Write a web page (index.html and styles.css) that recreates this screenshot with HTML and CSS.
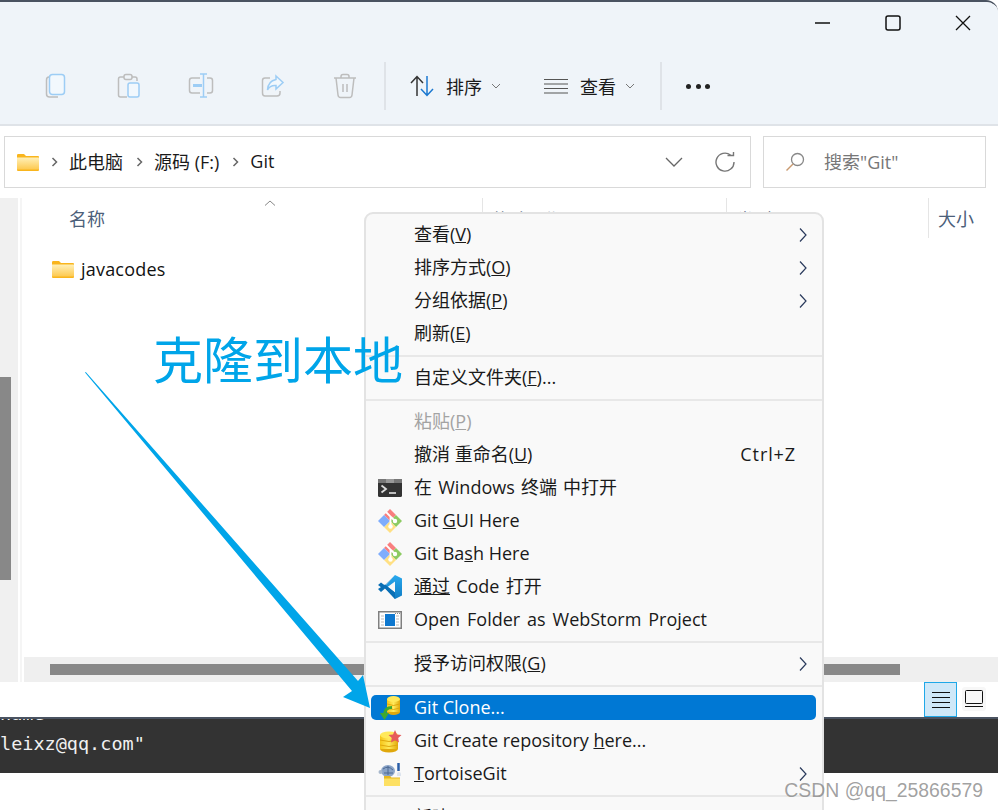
FILE: index.html
```html
<!DOCTYPE html>
<html lang="zh">
<head>
<meta charset="utf-8">
<title>Git</title>
<link rel="stylesheet" href="styles.css">
</head>
<body>
<svg class="defs" width="0" height="0">
  <defs>
    <linearGradient id="fg" x1="0" y1="0" x2="0" y2="1"><stop offset="0" stop-color="#fff0b8"/><stop offset="1" stop-color="#fdc94f"/></linearGradient>
    <linearGradient id="coin" x1="0" y1="0" x2="1" y2="0"><stop offset="0" stop-color="#f5c518"/><stop offset=".5" stop-color="#ffe95a"/><stop offset="1" stop-color="#e0a80c"/></linearGradient>
    <linearGradient id="vs" x1="0" y1="0" x2="0" y2="1"><stop offset="0" stop-color="#2aa9ee"/><stop offset="1" stop-color="#0f7cc4"/></linearGradient>
    <symbol id="folder" viewBox="0 0 22 17">
      <path d="M0 1.2Q0 0 1.2 0H7L9 2H21Q22 2 22 3V16Q22 17 21 17H1Q0 17 0 16Z" fill="#f9b51d"/>
      <path d="M0 3.5H21.6Q22 3.5 22 4V15.6H0Z" fill="url(#fg)"/>
    </symbol>
    <symbol id="git" viewBox="0 0 24 24">
      <path d="M12 0 18 6 12 12 6 6Z" fill="#f97f7f"/>
      <path d="M18 6 24 12 18 18 12 12Z" fill="#8ccb62"/>
      <path d="M12 12 18 18 12 24 6 18Z" fill="#ffe083"/>
      <path d="M6 6 12 12 6 18 0 12Z" fill="#7fadfd"/>
      <path d="M8 3 12.500 7.500V18M13 8 17 12" stroke="#fff" stroke-width="1.800" fill="none"/>
      <circle cx="12.500" cy="17.500" r="2.200" fill="#fff"/>
      <circle cx="17" cy="12" r="2.200" fill="#fff"/>
    </symbol>
    <symbol id="next" viewBox="0 0 10 16">
      <path d="M2 1.500 8 8 2 14.500" fill="none" stroke="#2a3a5c" stroke-width="1.200"/>
    </symbol>
  </defs>
</svg>

<div class="window">
  <header class="toolbar">
    <div class="caption">
      <svg class="cap-btn" width="16" height="16" viewBox="0 0 16 16"><path d="M0 8H15" stroke="#111" stroke-width="1.300"/></svg>
      <svg class="cap-btn" width="16" height="16" viewBox="0 0 16 16"><rect x="1" y="1" width="14" height="14" rx="2" fill="none" stroke="#111" stroke-width="1.500"/></svg>
      <svg class="cap-btn" width="16" height="16" viewBox="0 0 16 16"><path d="M1 1 15 15M15 1 1 15" stroke="#111" stroke-width="1.300"/></svg>
    </div>
    <div class="actions">
      <div class="tool">
        <svg width="24" height="26" viewBox="0 0 24 26" fill="none"><path d="M4 4Q1.500 4 1.500 7V21Q1.500 24 4.500 24H13" stroke="#bdbdbd" stroke-width="1.500"/><rect x="4.500" y="1.500" width="15" height="20" rx="3" stroke="#9dcdf5" stroke-width="1.500" fill="#f2f8fd"/></svg>
      </div>
      <div class="tool">
        <svg width="24" height="26" viewBox="0 0 24 26" fill="none"><path d="M7 4H3.500Q1.500 4 1.500 6V22Q1.500 24 3.500 24H10M15 4H18Q20 4 20 6V8" stroke="#bdbdbd" stroke-width="1.500"/><rect x="7" y="1.500" width="8" height="5" rx="2" stroke="#bdbdbd" stroke-width="1.500"/><rect x="11" y="10" width="11" height="14" rx="2" stroke="#9dcdf5" stroke-width="1.500" fill="#f2f8fd"/></svg>
      </div>
      <div class="tool">
        <svg width="26" height="26" viewBox="0 0 26 26" fill="none"><path d="M12 5H4Q1.500 5 1.500 7.500V17.500Q1.500 20 4 20H12M19 5H22Q24.500 5 24.500 7.500V17.500Q24.500 20 22 20H19" stroke="#bdbdbd" stroke-width="1.500"/><path d="M5 12.500H14" stroke="#9dcdf5" stroke-width="3"/><path d="M12 1H19M15.500 1V24M12 24H19" stroke="#9dcdf5" stroke-width="1.500"/></svg>
      </div>
      <div class="tool">
        <svg width="24" height="24" viewBox="0 0 24 24" fill="none"><path d="M9 4H4Q1.500 4 1.500 6.500V19Q1.500 22 4 22H16Q19 22 19 19V17" stroke="#bdbdbd" stroke-width="1.500"/><path d="M15 2 22 8.500 15 15V11.500Q9 11 6.500 16Q7 7 15 5.500Z" stroke="#9dcdf5" stroke-width="1.500" fill="#f2f8fd"/></svg>
      </div>
      <div class="tool">
        <svg width="24" height="26" viewBox="0 0 24 26" fill="none" stroke="#bdbdbd" stroke-width="1.500"><path d="M1 5H23M8 5V3.500Q8 1.500 10 1.500H14Q16 1.500 16 3.500V5M3 5 5 22Q5.300 24.500 7.500 24.500H16.500Q18.700 24.500 19 22L21 5M10 11V19M14 11V19"/></svg>
      </div>
      <span class="tool-sep"></span>
      <div class="menu-btn sort">
        <svg width="24" height="22" viewBox="0 0 24 22" fill="none" stroke-width="1.500"><path d="M7 21V1.500M1 8 7 1.500 13 8" stroke="#333"/><path d="M17 1V20.500M11 14 17 20.500 23 14" stroke="#1b78d0"/></svg>
        <span class="tool-label">排序</span>
        <svg class="caret" width="10" height="6" viewBox="0 0 10 6"><path d="M1 1 5 5 9 1" fill="none" stroke="#777"/></svg>
      </div>
      <div class="menu-btn view">
        <svg width="24" height="16" viewBox="0 0 24 16" fill="none" stroke="#555" stroke-width="1.200"><path d="M0 1.500H24M0 6H24M0 10.500H24M0 15H24"/></svg>
        <span class="tool-label">查看</span>
        <svg class="caret" width="10" height="6" viewBox="0 0 10 6"><path d="M1 1 5 5 9 1" fill="none" stroke="#777"/></svg>
      </div>
      <span class="tool-sep second"></span>
      <div class="more"><i></i><i></i><i></i></div>
    </div>
  </header>

  <div class="address-row">
    <div class="address">
      <svg class="addr-folder" width="22" height="17"><use href="#folder"/></svg>
      <svg class="crumb-sep" width="7" height="10" viewBox="0 0 7 10"><path d="M1.500 1 5.500 5 1.500 9" fill="none" stroke="#666" stroke-width="1.500"/></svg>
      <span class="crumb">此电脑</span>
      <svg class="crumb-sep" width="7" height="10" viewBox="0 0 7 10"><path d="M1.500 1 5.500 5 1.500 9" fill="none" stroke="#666" stroke-width="1.500"/></svg>
      <span class="crumb">源码 (F:)</span>
      <svg class="crumb-sep" width="7" height="10" viewBox="0 0 7 10"><path d="M1.500 1 5.500 5 1.500 9" fill="none" stroke="#666" stroke-width="1.500"/></svg>
      <span class="crumb">Git</span>
      <svg class="addr-down" width="18" height="10" viewBox="0 0 18 10"><path d="M1 1 9 9 17 1" fill="none" stroke="#666" stroke-width="1.300"/></svg>
      <svg class="addr-refresh" width="20" height="20" viewBox="0 0 20 20" fill="none"><path d="M15.500 3A9 9 0 1 0 19 10" stroke="#777" stroke-width="1.400"/><path d="M12.500 3.500H18.500V0" stroke="#777" stroke-width="1.400"/></svg>
    </div>
    <div class="search">
      <svg width="20" height="20" viewBox="0 0 20 20" fill="none"><circle cx="12.500" cy="7.500" r="6" stroke="#888" stroke-width="1.300"/><path d="M8 12 1.500 18.500" stroke="#c99a70" stroke-width="1.400"/></svg>
      <span class="search-text">搜索"Git"</span>
    </div>
  </div>

  <div class="body">
    <aside class="nav"><div class="nav-thumb"></div></aside>
    <span class="nav-edge"></span>
    <main class="files">
      <div class="columns">
        <div class="col col-name"><svg class="sort-up" width="12" height="6" viewBox="0 0 12 6"><path d="M1 5.500 6 1 11 5.500" fill="none" stroke="#888"/></svg>名称</div>
        <div class="col col-date">修改日期</div>
        <div class="col col-type">类型</div>
        <div class="col col-size">大小</div>
      </div>
      <div class="file-row">
        <svg width="22" height="17"><use href="#folder"/></svg>
        <span class="file-name">javacodes</span>
      </div>
      <div class="hscroll"><div class="hthumb"></div></div>
    </main>
  </div>

  <footer class="status">
    <div class="view-btn active">
      <svg width="18" height="18" viewBox="0 0 18 18" fill="none" stroke="#111" stroke-width="1"><path d="M0 1.500H18M0 6.500H18M0 11.500H18M0 16.500H18"/></svg>
    </div>
    <div class="view-btn">
      <svg width="18" height="18" viewBox="0 0 18 18" fill="none" stroke="#111" stroke-width="1"><rect x=".5" y=".5" width="17" height="13" rx="1"/><path d="M0 16.500H18"/></svg>
    </div>
  </footer>
</div>

<section class="terminal">
  <div class="term-line clipped">name</div>
  <div class="term-line email">leixz@qq.com"</div>
</section>

<nav class="context">
  <div class="item"><span class="ico"></span><span class="label">查看(<u>V</u>)</span><svg class="next" width="10" height="16"><use href="#next"/></svg></div>
  <div class="item"><span class="ico"></span><span class="label">排序方式(<u>O</u>)</span><svg class="next" width="10" height="16"><use href="#next"/></svg></div>
  <div class="item"><span class="ico"></span><span class="label">分组依据(<u>P</u>)</span><svg class="next" width="10" height="16"><use href="#next"/></svg></div>
  <div class="item"><span class="ico"></span><span class="label">刷新(<u>E</u>)</span></div>
  <hr class="sep">
  <div class="item"><span class="ico"></span><span class="label">自定义文件夹(<u>F</u>)...</span></div>
  <hr class="sep">
  <div class="item disabled"><span class="ico"></span><span class="label">粘贴(<u>P</u>)</span></div>
  <div class="item"><span class="ico"></span><span class="label">撤消 重命名(<u>U</u>)</span><span class="shortcut">Ctrl+Z</span></div>
  <div class="item"><span class="ico">
    <svg width="24" height="18" viewBox="0 0 24 18"><rect width="24" height="18" rx="1.500" fill="#333"/><rect x="0" width="24" height="4" fill="#777"/><rect x="8" width="8" height="4" fill="#999"/><path d="M3.500 6.500 8 10 3.500 13.500" fill="none" stroke="#ddd" stroke-width="1.800"/><path d="M11 14H18" stroke="#eee" stroke-width="1.500"/></svg>
  </span><span class="label spaced">在 Windows 终端 中打开</span></div>
  <div class="item"><span class="ico"><svg width="24" height="24"><use href="#git"/></svg></span><span class="label lat">Git <u>G</u>UI Here</span></div>
  <div class="item"><span class="ico"><svg width="24" height="24"><use href="#git"/></svg></span><span class="label lat">Git Ba<u>s</u>h Here</span></div>
  <div class="item"><span class="ico">
    <svg width="24" height="24" viewBox="0 0 24 24"><path d="M17 0 24 3.500V20.500L17 24 7 13V11Z" fill="url(#vs)"/><path d="M17 6.500V17.500L9.500 12Z" fill="#f9f9f9"/><path d="M17 0 4 13 0 10 3 7.500 7 10.500 17 0Z" fill="#0a6fb5"/><path d="M0 14 3 17 7 13.500 17 24V17.500L7 9.500Z" fill="#0a6fb5"/></svg>
  </span><span class="label spaced"><u>通过</u> Code 打开</span></div>
  <div class="item"><span class="ico">
    <svg width="24" height="18" viewBox="0 0 24 18"><rect x=".75" y=".75" width="22.500" height="16.500" fill="#fff" stroke="#808080" stroke-width="1.500"/><path d="M3 5H6M3 8H6M3 11H6M3 14H6M18 5H21M18 8H21M18 11H21M18 14H21" stroke="#bbb"/><path d="M17 2.500H22" stroke="#888" stroke-dasharray="1 1"/><rect x="7" y="3" width="10" height="12" fill="#0f78cf"/></svg>
  </span><span class="label lat wide">Open Folder as WebStorm Project</span></div>
  <hr class="sep">
  <div class="item"><span class="ico"></span><span class="label">授予访问权限(<u>G</u>)</span><svg class="next" width="10" height="16"><use href="#next"/></svg></div>
  <hr class="sep">
  <div class="item active"><span class="ico">
    <svg width="24" height="24" viewBox="0 0 24 24"><ellipse cx="15.500" cy="16" rx="6.500" ry="3" fill="#e0a80c"/><rect x="9" y="3" width="13" height="13" fill="url(#coin)"/><ellipse cx="15.500" cy="3" rx="6.500" ry="3" fill="#ffe95a"/><path d="M9 8Q15.500 11 22 8M9 12Q15.500 15 22 12" fill="none" stroke="#e0a80c"/><path d="M14 11.500Q7 11.500 6.500 18" fill="none" stroke="#3ea82f" stroke-width="3"/><path d="M2 17H11L6.500 24Z" fill="#3ea82f"/></svg>
  </span><span class="label lat">Git Clone...</span></div>
  <div class="item"><span class="ico">
    <svg width="24" height="24" viewBox="0 0 24 24"><ellipse cx="11" cy="20" rx="9" ry="3.500" fill="#e0a80c"/><rect x="2" y="6" width="18" height="14" fill="url(#coin)"/><ellipse cx="11" cy="6" rx="9" ry="3.500" fill="#ffe95a"/><path d="M2 11Q11 14 20 11M2 16Q11 19 20 16" fill="none" stroke="#e0a80c"/><path d="M17 1 19 5.500 23.500 6 20.200 9 21 13.500 17 11.300 13 13.500 13.800 9 10.500 6 15 5.500Z" fill="#e65a5a"/></svg>
  </span><span class="label lat">Git Create repository <u>h</u>ere...</span></div>
  <div class="item"><span class="ico">
    <svg width="24" height="24" viewBox="0 0 24 24"><ellipse cx="10" cy="9" rx="7" ry="6" fill="#8aa4c8"/><path d="M5 7Q10 3 15 8M6 11H15M10 4V13" stroke="#4d6a94" fill="none"/><circle cx="2.500" cy="10" r="2" fill="#a8b8cc"/><path d="M20.500 1V9" stroke="#2a5ea8" stroke-width="2.500"/><path d="M19 12Q19 10 21 10Q23 10 23 12V14H19Z" fill="#dde4ee"/><path d="M6 14H12L13.500 15.500H22V24H6Z" fill="#e6b820"/><path d="M6 16.500H22V24H6Z" fill="#fde063"/></svg>
  </span><span class="label lat"><u>T</u>ortoiseGit</span><svg class="next" width="10" height="16"><use href="#next"/></svg></div>
  <hr class="sep">
  <div class="item"><span class="ico"></span><span class="label">新建(<u>X</u>)</span></div>
</nav>

<svg class="arrow" width="300" height="345" viewBox="0 0 300 345">
  <path d="M0 .6 .8 0 273 309 278 303 285 336 258 325 267 319Z" fill="#00a5e9"/>
</svg>
<div class="note">克隆到本地</div>
<div class="watermark">CSDN @qq_25866579</div>
</body>
</html>
```

FILE: styles.css
```css
* { box-sizing: border-box; }
html, body { margin: 0; height: 810px; overflow: hidden; background: #fff; }
body {
  position: relative;
  font-family: "Open Sans", "Noto Sans CJK SC", sans-serif;
  font-size: 18px;
  color: #1a1a1a;
}
.defs { position: absolute; }

.window {
  height: 717px;
  display: flex;
  flex-direction: column;
  background: #fff;
  border-top: 2px solid #4a5361;
  border-radius: 0 12px 12px 0;
  overflow: hidden;
}
.toolbar {
  height: 124px;
  background: #eff4f9;
  border-bottom: 2px solid #dfe3e8;
  flex: none;
}
.caption {
  height: 42px;
  display: flex;
  justify-content: flex-end;
  align-items: center;
  padding: 0 27px 0 0;
  gap: 54px;
}
.actions {
  display: flex;
  align-items: center;
  height: 48px;
  margin-top: 18px;
  padding-left: 21px;
}
.tool {
  width: 72px;
  display: flex;
  justify-content: center;
  align-items: center;
}
.tool-sep {
  width: 2px;
  height: 48px;
  background: #dfe3e8;
  margin-left: 3px;
}
.menu-btn { display: flex; align-items: center; gap: 12px; }
.sort { margin-left: 24px; }
.view { margin-left: 43px; }
.caret { margin-left: -4px; }
.tool-label { width: 37px; }
.tool-sep.second { margin-left: 25px; }
.more { display: flex; gap: 4.500px; margin-left: 24px; }
.more i { width: 5px; height: 5px; border-radius: 50%; background: #222; }

.address-row {
  height: 72px;
  flex: none;
  display: flex;
  gap: 12px;
  padding: 10px 12px 10px 4px;
}
.address, .search {
  border: 1px solid #d9d9d9;
  display: flex;
  align-items: center;
  height: 52px;
  background: #fff;
}
.address { flex: 1; padding-left: 12px; }
.addr-folder { margin-right: 12px; }
.crumb-sep { margin-right: 11px; }
.crumb { margin-right: 13px; margin-top: -3px; }
.addr-down { margin-left: auto; margin-right: 32px; }
.addr-refresh { margin-right: 15px; }
.search { width: 223px; padding-left: 21px; gap: 19px; }
.search-text { color: #777; margin-top: -3px; }

.body { flex: 1; display: flex; min-height: 0; }
.nav { width: 18px; background: #f0f0f0; padding-top: 179px; flex: none; }
.nav-thumb { width: 11px; height: 203px; background: #888; }
.nav-edge { width: 2px; margin-left: 2px; background: #f5f5f5; flex: none; }
.files { flex: 1; display: flex; flex-direction: column; position: relative; }

.columns { display: flex; height: 40px; color: #4c607a; flex: none; }
.col { display: flex; align-items: center; padding-left: 9px; }
.col + .col { border-left: 1px solid #e5e5e5; }
.col-name { width: 460px; padding-left: 47px; position: relative; }
.sort-up { position: absolute; left: 242px; top: 2px; }
.col-date { width: 244px; padding-top: 2px; }
.col-type { width: 202px; padding-top: 2px; }
.col-size { flex: 1; }

.file-row {
  display: flex;
  align-items: center;
  gap: 7px;
  padding-left: 30px;
  height: 33px;
  margin-top: 15px;
  color: #111;
}
.file-name { margin-top: -1px; letter-spacing: .2px; }
.hscroll {
  margin-top: auto;
  margin-left: 2px;
  height: 25px;
  background: #efefef;
  padding: 7px 98px 7px 26px;
}
.hthumb { height: 11px; background: #888; }

.status {
  height: 35px;
  flex: none;
  display: flex;
  justify-content: flex-end;
  padding-right: 12px;
  gap: 5px;
}
.view-btn {
  width: 24px;
  display: flex;
  align-items: center;
  justify-content: center;
  margin: 5px 0 5px;
  background: #f7f7f7;
  border-radius: 3px;
  height: 24px;
}
.view-btn.active {
  width: 33px;
  height: 35px;
  margin: 0;
  background: #cfe8f8;
  border: 1px solid #1fa8e8;
  border-radius: 0;
}

.terminal {
  height: 56px;
  background: #333;
  border-top: 2px solid #4a5361;
  overflow: hidden;
  font-family: "DejaVu Sans Mono", monospace;
  font-size: 18.500px;
  color: #f0f0f0;
  line-height: 29px;
}
.term-line { white-space: pre; }
.term-line.clipped { margin-top: -20.500px; }
.term-line.email { margin-top: 1px; }

.context {
  position: absolute;
  left: 364px;
  top: 212px;
  width: 460px;
  height: 610px;
  background: #f9f9f9;
  border: 2px solid #e3e3e3;
  border-radius: 9px 9px 0 0;
  padding-top: 4px;
  display: flex;
  flex-direction: column;
  overflow: hidden;
}
.item {
  height: 25px;
  margin: 4px 6px 4px 5px;
  padding: 0 8px 0 7px;
  display: flex;
  align-items: center;
  flex: none;
  border-radius: 5px;
}
.ico {
  width: 24px;
  height: 24px;
  margin-right: 12px;
  display: flex;
  align-items: center;
  justify-content: center;
  flex: none;
}
.label { white-space: nowrap; margin-top: -3px; }
.label.lat { margin-top: -1px; }
.label.spaced { word-spacing: 1.500px; }
.label.wide { word-spacing: 2.200px; }
.next { margin-left: auto; }
.shortcut { margin-left: auto; margin-right: 12px; margin-top: -1px; letter-spacing: .9px; }
.sep { border: 0; height: 2px; margin: 4.500px 0; background: #e8e8e8; flex: none; }
.item.disabled { color: #a3a3a3; }
.item.active { background: #0078d4; color: #fff; }

.arrow { position: absolute; left: 85px; top: 372px; }
.note {
  position: absolute;
  left: 153px;
  top: 321px;
  font-family: "Noto Sans CJK SC", sans-serif;
  font-size: 50px;
  line-height: 72px;
  font-weight: 400;
  color: #00a5e9;
  white-space: nowrap;
}
.watermark {
  position: absolute;
  right: 15px;
  bottom: 8px;
  font-family: "Liberation Sans", sans-serif;
  font-size: 19.400px;
  line-height: 24px;
  color: rgba(120, 120, 120, .7);
  white-space: nowrap;
}
```
